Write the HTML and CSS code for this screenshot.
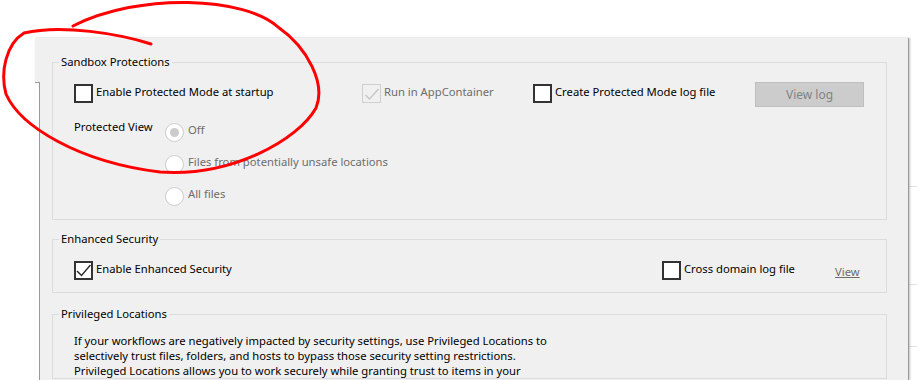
FILE: index.html
```html
<!DOCTYPE html>
<html lang="en">
<head>
    <meta charset="utf-8">
    <meta name="viewport" content="width=device-width, initial-scale=1">
    <title>Security (Enhanced)</title>
    <link rel="stylesheet" href="styles.css">
</head>
<body>
    <div class="screen">
        <div class="window">
            <div class="edge-stub"></div>

            <fieldset class="group sandbox-group">
                <legend>Sandbox Protections</legend>
                <div class="group-body sandbox">
                    <div class="option-row">
                        <label class="check"><span class="box"></span><span class="text">Enable Protected Mode at startup</span></label>
                        <label class="check disabled">
                            <span class="box">
                                <svg viewBox="0 0 19 19" width="19" height="19"><polyline points="3.5,11 7.5,15 16.5,5" fill="none" stroke="#c6c6c6" stroke-width="1.3"/></svg>
                            </span><span class="text">Run in AppContainer</span>
                        </label>
                        <label class="check"><span class="box"></span><span class="text">Create Protected Mode log file</span></label>
                        <button class="btn" disabled>View log</button>
                    </div>
                    <div class="view-row">
                        <span class="view-label">Protected View</span>
                        <div class="radios">
                            <label class="radio"><span class="dot selected"></span><span class="text">Off</span></label>
                            <label class="radio"><span class="dot"></span><span class="text">Files from potentially unsafe locations</span></label>
                            <label class="radio"><span class="dot"></span><span class="text">All files</span></label>
                        </div>
                    </div>
                </div>
            </fieldset>

            <fieldset class="group">
                <legend>Enhanced Security</legend>
                <div class="group-body enhanced">
                    <label class="check">
                        <span class="box">
                            <svg viewBox="0 0 15 15" width="15" height="15"><polyline points="1,8 5.5,12.5 14.5,2" fill="none" stroke="#2b2b2b" stroke-width="1.5"/></svg>
                        </span><span class="text">Enable Enhanced Security</span>
                    </label>
                    <label class="check"><span class="box"></span><span class="text">Cross domain log file</span></label>
                    <a class="link">View</a>
                </div>
            </fieldset>

            <fieldset class="group">
                <legend>Privileged Locations</legend>
                <div class="group-body privileged">
                    <p>If your workflows are negatively impacted by security settings, use Privileged Locations to<br>
                    selectively trust files, folders, and hosts to bypass those security setting restrictions.<br>
                    Privileged Locations allows you to work securely while granting trust to items in your</p>
                </div>
            </fieldset>
        </div>
        <div class="behind"></div>
    </div>

    <!-- freehand red markup drawn over the dialog -->
    <svg class="markup" width="917" height="380" viewBox="0 0 917 380">
        <path d="M151,44 C120,34 62,24 24,33 C6,44 0,72 6,94 C20,126 78,162 160,172 C232,177 298,140 316,108 C326,84 308,48 278,27 C245,-3 140,-8 73,26"
              fill="none" stroke="#f00" stroke-width="3" stroke-linecap="round" stroke-linejoin="round"/>
    </svg>
</body>
</html>
```

FILE: styles.css
```css
body {
    margin: 0;
    background: #fff;
    color: #000;
    font-family: 'Noto Sans', 'Open Sans', sans-serif;
    font-size: 11.25px;
    overflow: hidden;
}
.screen {
    display: flex;
    height: 380px;
    padding: 38px 0 0 35px;
    box-sizing: border-box;
}
.window {
    position: relative;
    flex: none;
    width: 874px;
    padding: 16px 0 0 17px;
    box-sizing: border-box;
    background: #f0f0f0;
    border-right: 1px solid #9a9a9a;
    box-shadow: 1px 0 2px rgba(0,0,0,0.25);
}
.edge-stub {
    position: absolute;
    left: 0;
    top: 44px;
    bottom: 0;
    width: 4px;
    background: #fff;
    border-top: 1px solid #999;
    border-right: 1px solid #999;
}
.behind {
    flex: 1;
    background:
        linear-gradient(#e2e2e2, #e2e2e2) 0 148px / 100% 1px no-repeat,
        linear-gradient(#e2e2e2, #e2e2e2) 0 246px / 100% 1px no-repeat,
        linear-gradient(#e2e2e2, #e2e2e2) 0 308px / 100% 1px no-repeat,
        #fff;
}
.group {
    width: 835px;
    box-sizing: border-box;
    margin: 0 0 13px;
    padding: 0 0 0 6px;
    border: 1px solid #dcdcdc;
    min-width: 0;
}
.sandbox-group {
    margin-bottom: 11px;
}
.group legend {
    padding: 0 2px;
    line-height: 16px;
}
.group-body {
    padding-left: 15px;
}
.text {
    line-height: 16px;
}
.check {
    display: flex;
    align-items: flex-start;
}
.box {
    flex: none;
    width: 19px;
    height: 19px;
    box-sizing: border-box;
    border: 2px solid #333;
    background: #fff;
    margin-right: 3px;
    display: flex;
    align-items: center;
    justify-content: center;
}
.check.disabled .box {
    border: 1px solid #cfcfcf;
    background: #f0f0f0;
}
.check.disabled svg {
    margin: -1px;
}
.check.disabled .text,
.radio .text,
.link {
    color: #6d6d6d;
}

/* sandbox */
.sandbox {
    padding-top: 12px;
    padding-bottom: 13px;
}
.option-row {
    display: grid;
    grid-template-columns: 288px 171px 222px 109px;
    align-items: start;
}
.option-row .check {
    margin-top: 2px;
}
.btn {
    height: 25px;
    width: 109px;
    background: #ccc;
    border: 1px solid #bfbfbf;
    color: #838383;
    font: inherit;
    font-size: 12px;
    padding: 0;
}
.view-row {
    display: flex;
    margin-top: 16px;
}
.view-label {
    width: 91px;
    line-height: 16px;
    margin-top: -4px;
}
.radios {
    display: flex;
    flex-direction: column;
    gap: 13px;
}
.radio {
    display: flex;
    align-items: flex-start;
}
.radio .text {
    margin-top: -1px;
}
.dot {
    flex: none;
    width: 19px;
    height: 19px;
    box-sizing: border-box;
    border: 1px solid #cdcdcd;
    border-radius: 50%;
    background: #fff;
    margin-right: 4px;
    display: flex;
    align-items: center;
    justify-content: center;
}
.dot.selected::after {
    content: "";
    width: 9px;
    height: 9px;
    border-radius: 50%;
    background: #cbcbcb;
}

/* enhanced */
.enhanced {
    display: grid;
    grid-template-columns: 588px 173px auto;
    align-items: start;
    padding-top: 14px;
    padding-bottom: 12px;
}
.link {
    text-decoration: underline;
    line-height: 16px;
    margin-top: 3px;
}

/* privileged */
.privileged {
    padding-top: 11px;
}
.privileged p {
    margin: 0;
    line-height: 15px;
}

.markup {
    position: absolute;
    left: 0;
    top: 0;
    pointer-events: none;
}
```
